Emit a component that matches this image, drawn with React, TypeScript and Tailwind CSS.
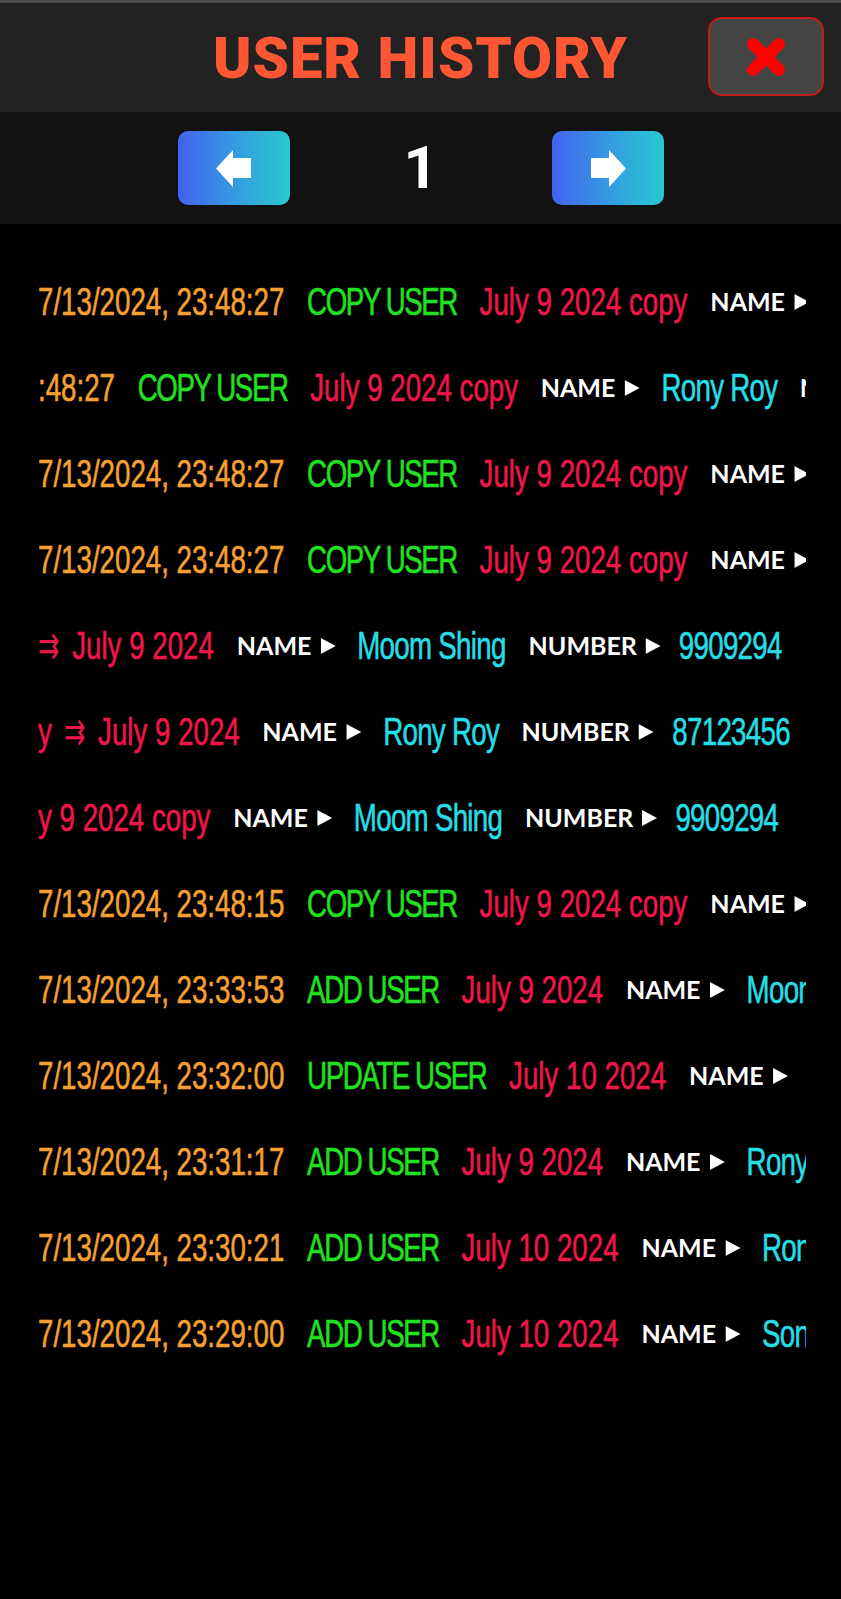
import React from "react";

type Seg = { t: string; c: "date" | "act" | "red" | "name" | "number" | "cyan" };

const rows: Seg[][] = [
  [
    { t: "7/13/2024, 23:48:27", c: "date" },
    { t: "COPY USER", c: "act" },
    { t: "July 9 2024 copy", c: "red" },
    { t: "NAME", c: "name" },
  ],
  [
    { t: ":48:27", c: "date" },
    { t: "COPY USER", c: "act" },
    { t: "July 9 2024 copy", c: "red" },
    { t: "NAME", c: "name" },
    { t: "Rony Roy", c: "cyan" },
    { t: "NUMBER", c: "number" },
  ],
  [
    { t: "7/13/2024, 23:48:27", c: "date" },
    { t: "COPY USER", c: "act" },
    { t: "July 9 2024 copy", c: "red" },
    { t: "NAME", c: "name" },
  ],
  [
    { t: "7/13/2024, 23:48:27", c: "date" },
    { t: "COPY USER", c: "act" },
    { t: "July 9 2024 copy", c: "red" },
    { t: "NAME", c: "name" },
  ],
  [
    { t: "⇉|July 9 2024", c: "red" },
    { t: "NAME", c: "name" },
    { t: "Moom Shing", c: "cyan" },
    { t: "NUMBER", c: "number" },
    { t: "9909294", c: "cyan" },
  ],
  [
    { t: "y ⇉|July 9 2024", c: "red" },
    { t: "NAME", c: "name" },
    { t: "Rony Roy", c: "cyan" },
    { t: "NUMBER", c: "number" },
    { t: "87123456", c: "cyan" },
  ],
  [
    { t: "y 9 2024 copy", c: "red" },
    { t: "NAME", c: "name" },
    { t: "Moom Shing", c: "cyan" },
    { t: "NUMBER", c: "number" },
    { t: "9909294", c: "cyan" },
  ],
  [
    { t: "7/13/2024, 23:48:15", c: "date" },
    { t: "COPY USER", c: "act" },
    { t: "July 9 2024 copy", c: "red" },
    { t: "NAME", c: "name" },
  ],
  [
    { t: "7/13/2024, 23:33:53", c: "date" },
    { t: "ADD USER", c: "act" },
    { t: "July 9 2024", c: "red" },
    { t: "NAME", c: "name" },
    { t: "Moom Shing", c: "cyan" },
  ],
  [
    { t: "7/13/2024, 23:32:00", c: "date" },
    { t: "UPDATE USER", c: "act" },
    { t: "July 10 2024", c: "red" },
    { t: "NAME", c: "name" },
  ],
  [
    { t: "7/13/2024, 23:31:17", c: "date" },
    { t: "ADD USER", c: "act" },
    { t: "July 9 2024", c: "red" },
    { t: "NAME", c: "name" },
    { t: "Rony Roy", c: "cyan" },
  ],
  [
    { t: "7/13/2024, 23:30:21", c: "date" },
    { t: "ADD USER", c: "act" },
    { t: "July 10 2024", c: "red" },
    { t: "NAME", c: "name" },
    { t: "Rony Roy", c: "cyan" },
  ],
  [
    { t: "7/13/2024, 23:29:00", c: "date" },
    { t: "ADD USER", c: "act" },
    { t: "July 10 2024", c: "red" },
    { t: "NAME", c: "name" },
    { t: "Sonu", c: "cyan" },
  ],
];

const cond =
  "font-['Liberation_Sans',Arial,sans-serif] text-[39px] leading-none [-webkit-text-stroke:0.6px_currentColor]";

function Label({ s }: { s: Seg }) {
  const slot = s.c === "name" ? "w-[138px]" : "w-[180px]";
  return (
    <span className={`block shrink-0 ${slot}`}>
      <span className="flex w-max items-center gap-[9px] origin-left scale-x-[1.408] font-['Lato',sans-serif] font-bold text-[25px] leading-none text-white">
        {s.t}
        <svg width="15" height="16" viewBox="0 0 15 16" className="mt-[1px]">
          <polygon points="0,0 15,8 0,16" fill="#ffffff" />
        </svg>
      </span>
    </span>
  );
}

function Segment({ s }: { s: Seg }) {
  if (s.c === "name" || s.c === "number") return <Label s={s} />;
  if (s.c === "red") {
    const parts = s.t.split("|");
    if (parts.length === 2) {
      const before = parts[0].replace("⇉", "").trim();
      return (
        <span className={`${cond} text-[#ef164b] flex items-center`}>
          {before && <span className="mr-[17px]">{before}</span>}
          <span className="font-['DejaVu_Sans',sans-serif] text-[36px] mr-[18px] mt-[2px] [-webkit-text-stroke:0px]">⇉</span>
          <span>{parts[1]}</span>
        </span>
      );
    }
    return <span className={`${cond} text-[#ef164b]`}>{s.t}</span>;
  }
  const color =
    s.c === "date"
      ? "text-[#f6a034]"
      : s.c === "act"
      ? "text-[#22e022] tracking-[-2px]"
      : "text-[#27dde5] tracking-[-1px]";
  return <span className={`${cond} ${color}`}>{s.t}</span>;
}

export default function App() {
  return (
    <div className="min-h-screen bg-black">
      <header className="relative h-[112px] border-t-[3px] border-[#4b4b4d] bg-[#222222] flex items-center justify-center">
        <h1 className="font-['Roboto',sans-serif] font-black text-[58px] leading-none tracking-[1px] text-[#ff5733]">
          USER HISTORY
        </h1>
        <button className="absolute right-[17px] top-[14px] w-[116px] h-[79px] rounded-[14px] border-2 border-[#c21a1a] bg-[#444444] flex items-center justify-center">
          <svg width="44" height="42" viewBox="0 0 44 42">
            <line x1="9" y1="8" x2="35" y2="34" stroke="#ff0000" strokeWidth="12" strokeLinecap="round" />
            <line x1="35" y1="8" x2="9" y2="34" stroke="#ff0000" strokeWidth="12" strokeLinecap="round" />
          </svg>
        </button>
      </header>

      <nav className="h-[112px] bg-[#111111] flex items-center justify-center gap-[114px]">
        <button className="w-[112px] h-[74px] rounded-[10px] bg-gradient-to-r from-[#4361ee] to-[#26c9cf] flex items-center justify-center">
          <svg width="36" height="37" viewBox="0 0 36 37">
            <polygon points="0,18.5 17,0 17,8 35,8 35,28 17,28 17,37" fill="#ffffff" />
          </svg>
        </button>
        <span className="w-[34px] text-center font-['Roboto',sans-serif] font-bold text-[60px] leading-none text-white">
          1
        </span>
        <button className="w-[112px] h-[74px] rounded-[10px] bg-gradient-to-r from-[#4361ee] to-[#26c9cf] flex items-center justify-center">
          <svg width="36" height="37" viewBox="0 0 36 37">
            <polygon points="36,18.5 19,0 19,8 1,8 1,28 19,28 19,37" fill="#ffffff" />
          </svg>
        </button>
      </nav>

      <main className="pt-[34px] pl-[38px] pr-[35px]">
        {rows.map((r, i) => (
          <div key={i} className="h-[86px] overflow-hidden flex items-center">
            <div className="flex shrink-0 items-center gap-[32px] whitespace-nowrap origin-left scale-x-[0.71]">
              {r.map((s, j) => (
                <Segment key={j} s={s} />
              ))}
            </div>
          </div>
        ))}
      </main>
    </div>
  );
}
